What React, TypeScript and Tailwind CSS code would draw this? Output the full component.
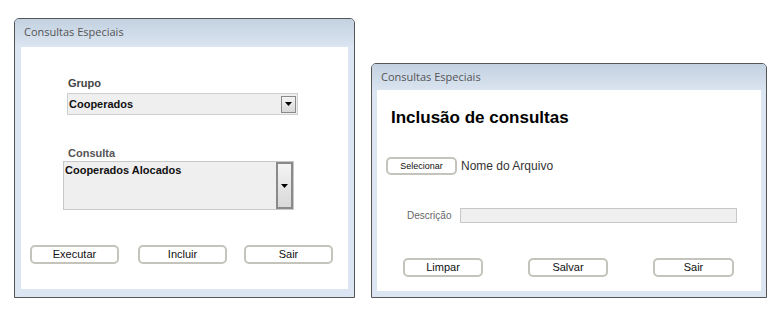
import type { ReactNode } from "react";

const font = { fontFamily: "'Liberation Sans', Arial, sans-serif" };

function Win({ title, className, children }: { title: string; className: string; children: ReactNode }) {
  return (
    <div className={`flex flex-col border border-[#555] rounded-t-[5px] bg-[#dce6f2] ${className}`}>
      <div className="h-[26px] shrink-0 rounded-t-[4px] bg-gradient-to-b from-[#c3d1e0] to-[#dae4f0] pl-[9px] pt-[6px] text-[11px] leading-[14px] text-[#555] [font-family:'Open_Sans',sans-serif]">
        {title}
      </div>
      {children}
    </div>
  );
}

function Btn({ label, className }: { label: string; className: string }) {
  return (
    <div
      className={`flex items-center justify-center rounded-[5px] border-2 border-[#c4c4bc] bg-white leading-none text-[#111] ${className}`}
    >
      {label}
    </div>
  );
}

function Arrow({ className }: { className: string }) {
  return (
    <div
      className={`flex items-center justify-center border-2 border-[#8a8a8a] bg-gradient-to-b from-[#f4f4f4] to-[#d8d8d8] ${className}`}
    >
      <svg width="7" height="4" viewBox="0 0 7 4">
        <path d="M0 0h7L3.5 4z" fill="#000" />
      </svg>
    </div>
  );
}

export default function App() {
  return (
    <div className="flex h-[315px] w-[776px] items-start bg-white pl-[14px]" style={font}>
      <Win title="Consultas Especiais" className="mt-[18px] h-[280px] w-[341px]">
        <div className="mx-[6px] mt-[2px] flex h-[242px] flex-col bg-white">
          <div className="ml-[47px] mt-[29px] text-[11px] font-bold leading-[14px] text-[#444]">Grupo</div>
          <div className="ml-[46px] mt-[3px] flex h-[22px] w-[231px] items-center border border-[#cfcfcf] bg-[#efefef] pr-[1px]">
            <span className="flex-1 pl-[1px] text-[11px] font-bold text-[#111]">Cooperados</span>
            <Arrow className="h-[17px] w-[15px] border-[1px]" />
          </div>
          <div className="ml-[47px] mt-[31px] text-[11px] font-bold leading-[14px] text-[#555]">Consulta</div>
          <div className="ml-[42px] mt-[1px] flex h-[49px] w-[231px] border border-[#c8c8c8] bg-[#efefef]">
            <span className="flex-1 pl-[1px] pt-[1px] text-[11px] font-bold leading-[14px] text-[#111]">Cooperados Alocados</span>
            <Arrow className="w-[17px]" />
          </div>
          <div className="mt-[35px] flex pl-[9px] text-[11px]">
            <Btn label="Executar" className="h-[19px] w-[89px]" />
            <Btn label="Incluir" className="ml-[19px] h-[19px] w-[89px]" />
            <Btn label="Sair" className="ml-[17px] h-[19px] w-[89px]" />
          </div>
        </div>
      </Win>

      <Win title="Consultas Especiais" className="ml-[16px] mt-[63px] h-[235px] w-[396px]">
        <div className="mx-[5px] flex h-[201px] flex-col bg-white">
          <div className="ml-[14px] mt-[18px] text-[17px] font-bold leading-[20px] text-black">Inclusão de consultas</div>
          <div className="ml-[9px] mt-[29px] flex items-center">
            <Btn label="Selecionar" className="h-[18px] w-[71px] text-[9px]" />
            <span className="ml-[4px] text-[12px] text-[#333]">Nome do Arquivo</span>
          </div>
          <div className="ml-[30px] mt-[33px] flex items-center">
            <span className="w-[53px] text-[10px] text-[#666]">Descrição</span>
            <div className="h-[15px] w-[277px] border border-[#c8c8c8] bg-[#efefef]" />
          </div>
          <div className="ml-[26px] mt-[35px] flex text-[11px]">
            <Btn label="Limpar" className="h-[19px] w-[80px]" />
            <Btn label="Salvar" className="ml-[45px] h-[19px] w-[80px]" />
            <Btn label="Sair" className="ml-[45px] h-[19px] w-[81px]" />
          </div>
        </div>
      </Win>
    </div>
  );
}
